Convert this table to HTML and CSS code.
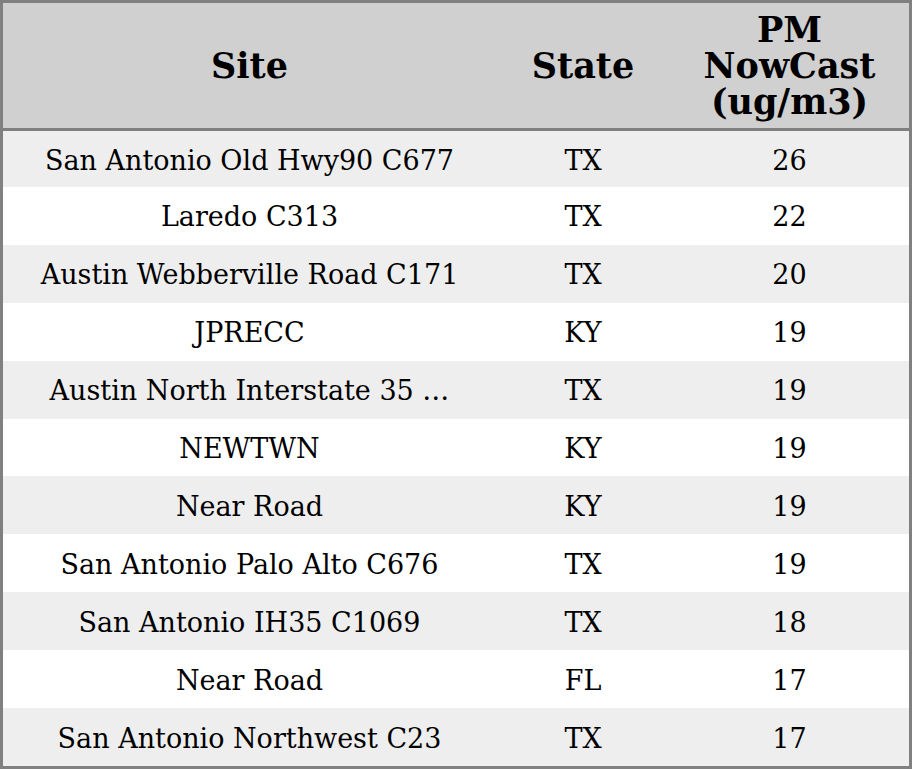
FILE: index.html
```html
<!DOCTYPE html>
<html>
<head>
<meta charset="utf-8">
<link rel="stylesheet" href="styles.css">
</head>
<body>
<table class="grid">
  <colgroup>
    <col class="c-site">
    <col class="c-state">
    <col class="c-pm">
  </colgroup>
  <thead>
    <tr class="head">
      <th>Site</th>
      <th>State</th>
      <th><span class="hl">PM</span><span class="hl">NowCast</span><span class="hl">(ug/m3)</span></th>
    </tr>
  </thead>
  <tbody>
    <tr><td>San Antonio Old Hwy90 C677</td><td>TX</td><td>26</td></tr>
    <tr><td>Laredo C313</td><td>TX</td><td>22</td></tr>
    <tr><td>Austin Webberville Road C171</td><td>TX</td><td>20</td></tr>
    <tr><td>JPRECC</td><td>KY</td><td>19</td></tr>
    <tr><td>Austin North Interstate 35 …</td><td>TX</td><td>19</td></tr>
    <tr><td>NEWTWN</td><td>KY</td><td>19</td></tr>
    <tr><td>Near Road</td><td>KY</td><td>19</td></tr>
    <tr><td>San Antonio Palo Alto C676</td><td>TX</td><td>19</td></tr>
    <tr><td>San Antonio IH35 C1069</td><td>TX</td><td>18</td></tr>
    <tr><td>Near Road</td><td>FL</td><td>17</td></tr>
    <tr><td>San Antonio Northwest C23</td><td>TX</td><td>17</td></tr>
  </tbody>
</table>
</body>
</html>
```
FILE: styles.css
```css
html, body {
  margin: 0;
  padding: 0;
  background: #ffffff;
}
.grid {
  width: 912px;
  height: 769px;
  border-collapse: separate;
  border-spacing: 0;
  border: 3px solid #808080;
  box-sizing: border-box;
  table-layout: fixed;
  font-family: "DejaVu Serif", serif;
  color: #000;
}
.c-site { width: 493px; }
.c-state { width: 174px; }
.c-pm { width: 239px; }
.head th {
  height: 125px;
  padding: 0;
  background: #d0d0d0;
  border-bottom: 3px solid #808080;
  font-size: 35px;
  line-height: 36px;
  font-weight: bold;
  text-align: center;
  vertical-align: middle;
}
.hl {
  display: block;
}
tbody td {
  height: 55.9px;
  padding: 2px 0 0;
  font-size: 27px;
  text-align: center;
  vertical-align: middle;
  white-space: nowrap;
}
tbody tr:first-child td {
  height: 54px;
}
tbody tr:nth-child(odd) td {
  background: #eeeeee;
}
```
